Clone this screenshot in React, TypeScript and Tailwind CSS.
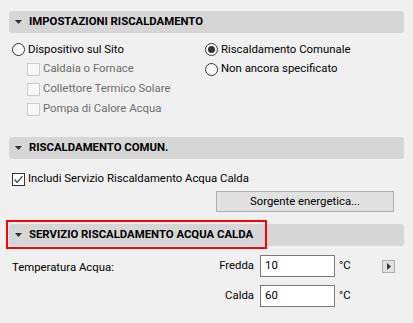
import React from "react";

function Radio({ checked, label }: { checked?: boolean; label: string }) {
  return (
    <div className="flex items-center h-full">
      <span className="w-[13px] h-[13px] rounded-full border border-[#333] bg-white flex items-center justify-center">
        {checked && <span className="w-[7px] h-[7px] rounded-full bg-[#333]" />}
      </span>
      <span className="ml-[3px] text-black">{label}</span>
    </div>
  );
}

function Check({ checked, disabled, label }: { checked?: boolean; disabled?: boolean; label: string }) {
  return (
    <div className="flex items-center h-full">
      <span
        className={
          disabled
            ? "w-[13px] h-[13px] border border-[#cccccc] bg-[#f7f7f7]"
            : "w-[13px] h-[13px] border border-[#333] bg-white flex items-center justify-center"
        }
      >
        {checked && (
          <svg width="11" height="11" viewBox="0 0 11 11">
            <path d="M1.5 5.5 L4.2 8.3 L9.5 2.2" fill="none" stroke="#333" strokeWidth="1.2" />
          </svg>
        )}
      </span>
      <span className={disabled ? "ml-[3px] text-[#6d6d6d]" : "ml-[3px] text-black"}>{label}</span>
    </div>
  );
}

function Header({ title }: { title: string }) {
  return (
    <div className="mx-[9px] h-[22px] bg-[#d6d6d6] rounded-[3px] flex items-center">
      <svg width="7" height="4" viewBox="0 0 7 4" className="ml-[6px]">
        <path d="M0 0 H7 L3.5 4 Z" fill="#333" />
      </svg>
      <span className="ml-[7px] font-bold text-black">{title}</span>
    </div>
  );
}

export default function App() {
  return (
    <div className="w-[413px] h-[323px] bg-[#f0f0f0] text-[11.35px] text-black overflow-hidden font-['Roboto',sans-serif]">
      <div className="h-[11px]" />
      <Header title="IMPOSTAZIONI RISCALDAMENTO" />

      <div className="mt-[7px] flex">
        <div className="w-[205px] pl-[12px]">
          <div className="h-[19px]">
            <Radio label="Dispositivo sul Sito" />
          </div>
          <div className="pl-[15px]">
            <div className="h-[20px]">
              <Check disabled label="Caldaia o Fornace" />
            </div>
            <div className="h-[20px]">
              <Check disabled label="Collettore Termico Solare" />
            </div>
            <div className="h-[20px]">
              <Check disabled label="Pompa di Calore Acqua" />
            </div>
          </div>
        </div>
        <div>
          <div className="h-[19px]">
            <Radio checked label="Riscaldamento Comunale" />
          </div>
          <div className="h-[20px]">
            <Radio label="Non ancora specificato" />
          </div>
        </div>
      </div>

      <div className="mt-[18px]">
        <Header title="RISCALDAMENTO COMUN." />
      </div>
      <div className="mt-[10px] pl-[12px] h-[20px]">
        <Check checked label="Includi Servizio Riscaldamento Acqua Calda" />
      </div>
      <div className="mt-[2px] pl-[216px]">
        <button className="w-[178px] h-[21px] border border-[#adadad] bg-[#e1e1e1] text-black flex items-center justify-center">
          Sorgente energetica...
        </button>
      </div>

      <div className="mt-[12px] relative">
        <Header title="SERVIZIO RISCALDAMENTO ACQUA CALDA" />
        <div className="absolute left-[6px] top-[-4px] w-[261px] h-[29px] border-2 border-[#ff0000]" />
      </div>

      <div className="mt-[9px] flex">
        <div className="pl-[12px] w-[200px] pt-[2px]">
          <div className="h-[22px] flex items-center">Temperatura Acqua:</div>
        </div>
        <div className="flex flex-col gap-[8px]">
          <div className="flex items-center h-[22px]">
            <span className="w-[54px] text-right">Fredda</span>
            <div className="ml-[6px] w-[75px] h-[22px] border border-[#7a7a7a] bg-white flex items-center pl-[4px]">
              10
            </div>
            <span className="ml-[4px] w-[43px]">°C</span>
            <span className="w-[13px] h-[13px] border border-[#adadad] bg-[#e1e1e1] flex items-center justify-center">
              <svg width="4" height="7" viewBox="0 0 4 7">
                <path d="M0 0 L4 3.5 L0 7 Z" fill="#333" />
              </svg>
            </span>
          </div>
          <div className="flex items-center h-[22px]">
            <span className="w-[54px] text-right">Calda</span>
            <div className="ml-[6px] w-[75px] h-[22px] border border-[#7a7a7a] bg-white flex items-center pl-[4px]">
              60
            </div>
            <span className="ml-[4px]">°C</span>
          </div>
        </div>
      </div>
    </div>
  );
}
